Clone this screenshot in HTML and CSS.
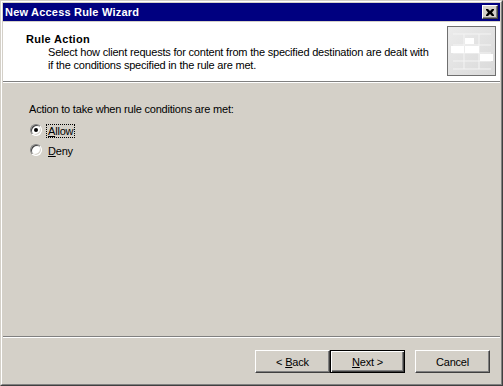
FILE: index.html
```html
<!DOCTYPE html>
<html lang="en">
<head>
  <meta charset="UTF-8">
  <title>New Access Rule Wizard</title>
  <link rel="stylesheet" href="styles.css">
</head>
<body>
  <div class="window">
    <div class="frame">
      <div class="titlebar">
        <span class="title">New Access Rule Wizard</span>
        <span class="close-btn">
          <svg width="8" height="7" viewBox="0 0 8 7">
            <path d="M0 0h2l2 2 2-2h2v1L6 3.5 8 6v1H6L4 5 2 7H0V6l2-2.5L0 1z" fill="#000"/>
          </svg>
        </span>
      </div>

      <div class="header">
        <div class="header-text">
          <div class="header-title">Rule Action</div>
          <div class="header-desc">Select how client requests for content from the specified destination are dealt with if the conditions specified in the rule are met.</div>
        </div>
        <svg class="header-icon" width="49" height="50" viewBox="0 0 49 50">
          <defs>
            <linearGradient id="wash" x1="0" y1="0" x2="1" y2="1">
              <stop offset="0" stop-color="#ececec"/>
              <stop offset="1" stop-color="#d9d9d9"/>
            </linearGradient>
          </defs>
          <rect x="0.5" y="0.5" width="48" height="49" fill="url(#wash)" stroke="#6f6f6f"/>
          <g fill="none" stroke="#f4f4f4">
            <path d="M6 8h38M6 19h38M6 27h38M6 35h38M6 43h38"/>
            <path d="M17 8v35M32 8v35"/>
          </g>
          <rect x="18" y="12" width="9" height="6" fill="#fff"/>
          <rect x="4" y="20" width="13" height="7" fill="#fff"/>
          <rect x="18" y="20" width="14" height="7" fill="#fff"/>
          <rect x="33" y="28" width="13" height="7" fill="#fff"/>
        </svg>
      </div>

      <div class="body">
        <div class="prompt">Action to take when rule conditions are met:</div>
        <div class="options">
          <label class="option">
            <span class="radio checked"></span>
            <span class="option-label focused"><u>A</u>llow</span>
          </label>
          <label class="option">
            <span class="radio"></span>
            <span class="option-label"><u>D</u>eny</span>
          </label>
        </div>
      </div>

      <div class="footer">
        <span class="btn"><span>&lt; <u>B</u>ack</span></span>
        <span class="btn default"><span><u>N</u>ext &gt;</span></span>
        <span class="btn cancel"><span>Cancel</span></span>
      </div>
    </div>
  </div>
</body>
</html>
```

FILE: styles.css
```css
* {
  box-sizing: border-box;
}
body {
  margin: 0;
  font-family: 'Liberation Sans', Arial, sans-serif;
  font-size: 11px;
  letter-spacing: -0.2px;
  color: #000;
  background: #d4d0c8;
}
.window {
  width: 503px;
  height: 386px;
  border: 1px solid;
  border-color: #d4d0c8 #404040 #404040 #d4d0c8;
}
.frame {
  height: 100%;
  border: 1px solid;
  border-color: #fff #808080 #808080 #fff;
  padding: 1px;
  background: #d4d0c8;
  display: flex;
  flex-direction: column;
}
.titlebar {
  height: 18px;
  background: #000080;
  color: #fff;
  display: flex;
  align-items: center;
  justify-content: space-between;
  padding: 0 2px 0 2px;
  margin-bottom: 1px;
}
.title {
  font-weight: bold;
  letter-spacing: 0.2px;
  line-height: 18px;
}
.close-btn {
  width: 16px;
  height: 14px;
  display: flex;
  align-items: center;
  justify-content: center;
  background: #d4d0c8;
  border: 1px solid;
  border-color: #fff #404040 #404040 #fff;
  box-shadow: inset -1px -1px #808080;
}
.header {
  height: 60px;
  background: #fff;
  border-bottom: 1px solid #808080;
  display: flex;
  align-items: flex-start;
  padding: 4px 4px 0 23px;
}
.header-text {
  flex: 1;
  padding-top: 6px;
}
.header-title {
  font-weight: bold;
  letter-spacing: 0.3px;
  line-height: 14px;
}
.header-desc {
  width: 385px;
  margin-left: 22px;
  line-height: 13px;
}
.header-icon {
  display: block;
  flex: none;
}
.body {
  flex: 1;
  border-top: 1px solid #fff;
  padding: 20px 0 0 26px;
}
.prompt {
  line-height: 13px;
}
.options {
  margin-top: 8px;
}
.option {
  display: flex;
  align-items: flex-start;
  height: 20px;
  line-height: 14px;
}
.radio {
  position: relative;
  width: 12px;
  height: 12px;
  margin: 0 4px 0 1px;
  border-radius: 50%;
  background: #fff;
  border: 1px solid;
  border-color: #808080 #fff #fff #808080;
  box-shadow: inset 1px 1px #404040, inset -1px -1px #d4d0c8;
}
.radio.checked::after {
  content: '';
  position: absolute;
  left: 3px;
  top: 3px;
  width: 4px;
  height: 4px;
  border-radius: 50%;
  background: #000;
}
.option-label {
  padding: 0 1px;
  border: 1px dotted transparent;
  line-height: 12px;
}
.option-label.focused {
  border-color: #000;
}
.footer {
  height: 47px;
  border-top: 1px solid #808080;
  box-shadow: inset 0 1px #fff;
  display: flex;
  justify-content: flex-end;
  align-items: flex-start;
  padding: 13px 10px 0 0;
}
.btn {
  width: 75px;
  height: 23px;
  display: flex;
  align-items: center;
  justify-content: center;
  border: 1px solid;
  border-color: #fff #404040 #404040 #fff;
  box-shadow: inset -1px -1px #808080;
}
.btn.default {
  border-color: #000;
  box-shadow: inset 1px 1px #fff, inset -1px -1px #404040, inset -2px -2px #808080;
}
.btn.cancel {
  margin-left: 10px;
}
```
